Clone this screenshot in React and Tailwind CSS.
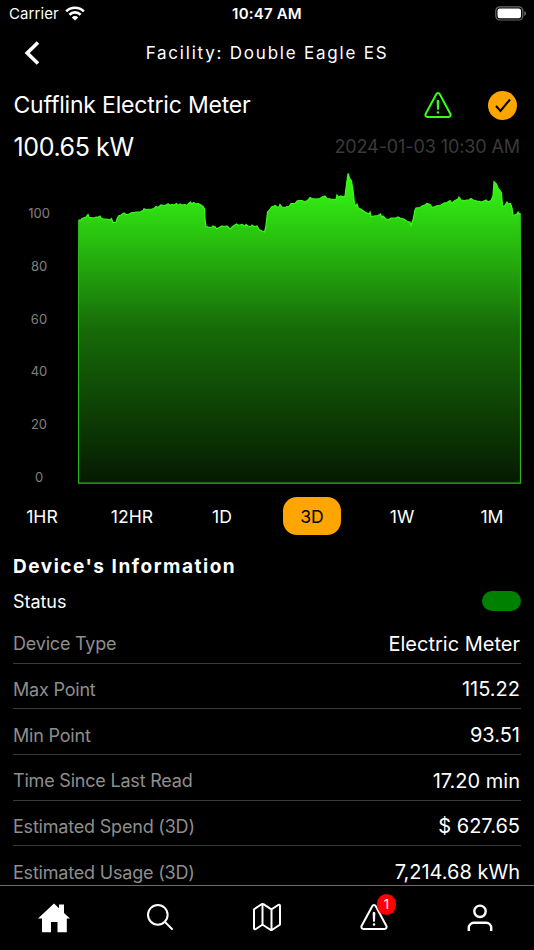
import React, { useState } from "react";
import { IoMapOutline, IoSearchOutline, IoWarningOutline } from "react-icons/io5";

const RANGES = ["1HR", "12HR", "1D", "3D", "1W", "1M"];
const TICKS = [100, 80, 60, 40, 20, 0];

const DETAILS = [
  { label: "Device Type", value: "Electric Meter" },
  { label: "Max Point", value: "115.22" },
  { label: "Min Point", value: "93.51" },
  { label: "Time Since Last Read", value: "17.20 min" },
  { label: "Estimated Spend (3D)", value: "$ 627.65" },
  { label: "Estimated Usage (3D)", value: "7,214.68 kWh" },
];

// Load curve as x,y pairs in chart units
const CURVE =
  "78.5,220 80,220 81,220.3 82,218.5 84,217.7 86,217 88,214.5 89.5,218 91,217.5 94,218 96,217 98,217.3 100,216 101,218 103,219 106,219 108,219.5 110,220 111.5,218.5 113,222.7 116,222.5 117,219 118.5,216 121,215 124,213 126,214.5 128,214.5 130,213.5 132,212.5 134,212.7 136,212 140,212 143,210.5 144,208.8 146,209.5 152,209 154,208.5 156,206.5 158,207.5 161,205 164,205.5 166,205 168,203.8 170,205.3 172,204.5 174,205 176.5,203.5 178,205.5 " +
  "180,204 182,205 185,204.5 187,205.5 188.5,203.5 190.5,202 192,204 193.5,202.5 196,204 198,203.5 201,205 203,206.5 204.5,209 205,219 206,226.5 210,227.5 212,227 213,226 214,227.5 215,226.5 216.5,229 218,228 220,227 222,226 224,226.5 227,226 229,228 230.5,229 232,227 234,225.5 236.5,224 238,225 240,225 242,224.5 243,225 245,226.5 246,224.5 248,226 251,226.5 252,225 254,226.5 257,226 259,229.5 262,231 264.5,232 266,226 267.5,212 270,209.5 271.5,207 274,206 275,205.5 277,207 279,207 280,204.5 282,207 285,207.5 287,206.5 289,206.5 291,203.5 295,203.5 297,201 299,200.5 302,200.5 305,202 308,200 310,197.5 312,198.5 316,199 320,198.5 322,197 325,196 327,198.5 331,199 336,199.5 337,195 338.5,197 341,196 343,197 345,196 346.5,184 348,173.5 349.5,178 351.5,181 353,190 354.5,204 356,206 " +
  "357,204 358.5,208.5 361,209 364,211.5 367,213 369,214 370,212 371,216.5 374,216 378,215.5 380.5,214 382,218 383,216 386,219 389,219.5 391,218 396,218 398,217 400,218 404,219 407,221.5 410,222 411,225.5 413,220 415,210 416,208 420,207.5 423,205.5 425,205 427,203.5 430,204.5 432,207 434,207 436,206 441,205 444,203 447,202.5 450,200.5 452,203 455,200.5 458,199 459,197 461,200 464,200.5 467,200 469,200 471,198.5 473,200 477,201 482,202 486,200 488,202 491,200.5 493,196 494,181.5 496.5,184 498,188 500,190.5 501.5,193 502.5,206 504.5,206 507,202 508.5,204 510.5,203.5 512,208 513,215 515,215 517,214 518,212 519,214 520.5,213.5";

const StatusBar = () => (
  <div className="grid h-7 shrink-0 grid-cols-3 items-center pl-[9px] pr-[7px] text-[15px] leading-7">
    <div className="flex items-center gap-[6px]">
      <span className="tracking-[0.1px]">Carrier</span>
      <svg className="-mt-0.5" width="20" height="15" viewBox="0 0 20 15" fill="none" stroke="white" strokeWidth="2.7">
        <path d="M1.2 5.4a12.4 12.4 0 0 1 17.6 0" />
        <path d="M4.4 8.8a7.9 7.9 0 0 1 11.2 0" />
        <path d="M10 14.6l-3.2-3.2a4.5 4.5 0 0 1 6.4 0z" fill="white" stroke="none" />
      </svg>
    </div>
    <span className="-ml-0.5 text-center text-[15px] font-semibold tracking-[0.2px]">10:47 AM</span>
    <svg className="-mt-0.5 justify-self-end" width="32" height="15" viewBox="0 0 32 15">
      <rect x="0.8" y="0.8" width="27" height="13.2" rx="4" fill="none" stroke="#6b6b6b" strokeWidth="1.2" />
      <rect x="2.5" y="2.5" width="23.5" height="9.8" rx="2.2" fill="white" />
      <path d="M29.3 5v5c1.2-.5 1.7-1.4 1.7-2.5s-.5-2-1.7-2.5z" fill="#6b6b6b" />
    </svg>
  </div>
);

const Header = () => (
  <header className="grid h-[50px] shrink-0 grid-cols-[64px_1fr_64px] items-center">
    <svg className="ml-6" width="16" height="24" viewBox="0 0 16 24" fill="none" stroke="white" strokeWidth="3.6">
      <path d="M14 1.5L3.2 12 14 22.5" />
    </svg>
    <h1 className="pt-0.5 text-center text-[17px] tracking-[1.78px]">Facility: Double Eagle ES</h1>
  </header>
);

const Chart = () => (
  <div className="flex h-[320px] shrink-0 pr-[13px]">
    <div className="-mb-[3px] flex w-[78px] flex-col justify-between pt-[39px] text-center text-[13px] leading-5 text-[#808080]">
      {TICKS.map(t => <span key={t}>{t}</span>)}
    </div>
    <svg width="443" height="320" viewBox="78 164 443 320">
      <defs>
        <linearGradient id="load" gradientUnits="userSpaceOnUse" x1="0" y1="173" x2="0" y2="484">
          <stop offset="0" stopColor="#36ff14" />
          <stop offset="0.5" stopColor="#36ff14" stopOpacity="0.42" />
          <stop offset="1" stopColor="#36ff14" stopOpacity="0.1" />
        </linearGradient>
      </defs>
      <polygon points={`${CURVE} 520.5,483.5 78.5,483.5`} fill="url(#load)" />
      <polyline points={CURVE} fill="none" stroke="#36ff14" strokeWidth="1.2" />
      <path d="M78.5 220V483.2H520.5V213.5" fill="none" stroke="#2bb81a" strokeWidth="1.2" />
    </svg>
  </div>
);

const HomeIcon = () => (
  <svg className="mt-px ml-px" width="32" height="30" viewBox="0 0 32 30" fill="white">
    <path d="M16 0.5l5 4.7V1.5h5v8.4l6 5.6h-3.2V29.2h-9.3V19h-6.5v10.2H4V15.5H0z" />
  </svg>
);

const PersonIcon = () => (
  <svg className="mt-[1.5px] mr-px" width="26" height="28" viewBox="0 0 26 28" fill="none" stroke="white" strokeWidth="2.4">
    <circle cx="13" cy="7.3" r="5.7" />
    <path d="M1.8 27v-3.2a5 5 0 0 1 5-5h12.4a5 5 0 0 1 5 5V27" />
  </svg>
);

const TabBar = () => (
  <nav className="grid h-[65px] shrink-0 grid-cols-5 justify-items-center border-t border-[#6a6a6a] bg-black pt-4">
    <HomeIcon />
    <IoSearchOutline size={32} className="-mt-px" />
    <IoMapOutline size={32} className="-mt-px" />
    <div className="relative -mt-px">
      <IoWarningOutline size={32} />
      <span className="absolute -top-[7px] left-[19px] flex h-[21px] w-[19px] items-center justify-center rounded-full bg-[#ff0000] text-[13px]">1</span>
    </div>
    <PersonIcon />
  </nav>
);

export default function App() {
  const [range, setRange] = useState("3D");

  return (
    <div className="flex h-[950px] w-[534px] flex-col overflow-hidden bg-black font-['Inter',sans-serif] text-white">
      <StatusBar />
      <Header />

      <div className="flex h-[54px] shrink-0 items-center pl-[13.5px] pr-[13px]">
        <h2 className="flex-1 pt-px text-[23px] tracking-[-0.2px]">Cufflink Electric Meter</h2>
        <IoWarningOutline size={32} className="mr-[34px] text-[#36ff14]" />
        <div className="mr-1 flex size-[29px] items-center justify-center rounded-full bg-[#ffa500]">
          <svg width="18" height="16" viewBox="0 0 18 16" fill="none" stroke="black" strokeWidth="2">
            <path d="M2 9l4.5 5L16 2.5" />
          </svg>
        </div>
      </div>
      <div className="flex h-8 shrink-0 items-center justify-between pl-[13.5px] pr-[14px]">
        <span className="text-[25px] tracking-[-0.4px]">100.65 kW</span>
        <span className="pb-1 text-[18px] tracking-[-0.1px] text-[#3a3a3a]">2024-01-03 10:30 AM</span>
      </div>

      <Chart />

      {/* Range picker */}
      <div className="flex h-[64px] shrink-0 items-center justify-between px-[13px]">
        {RANGES.map(r => (
          <button
            key={r}
            onClick={() => setRange(r)}
            className={`h-[38px] w-[58px] whitespace-nowrap rounded-[14px] pt-0.5 text-[17.6px] ${r === range ? "bg-[#ffa500] text-black" : ""}`}
          >
            {r}
          </button>
        ))}
      </div>

      <section className="min-h-0 flex-1 overflow-hidden px-[13px]">
        <h3 className="h-9 pt-px text-[19px] font-bold leading-9 tracking-[1.53px]">Device's Information</h3>
        <div className="flex h-[34px] items-center justify-between">
          <span className="text-[18px] tracking-[-0.05px]">Status</span>
          <span className="h-5 w-[39px] rounded-full bg-[#008000]" />
        </div>
        {DETAILS.map(d => (
          <div key={d.label} className="flex h-[45.65px] items-center justify-between border-b border-[#3a3a3a] pt-[7px] pr-px">
            <span className="text-[18px] tracking-[-0.2px] text-[#8e8e8e]">{d.label}</span>
            <span className="text-[20px]">{d.value}</span>
          </div>
        ))}
      </section>

      <TabBar />
    </div>
  );
}
